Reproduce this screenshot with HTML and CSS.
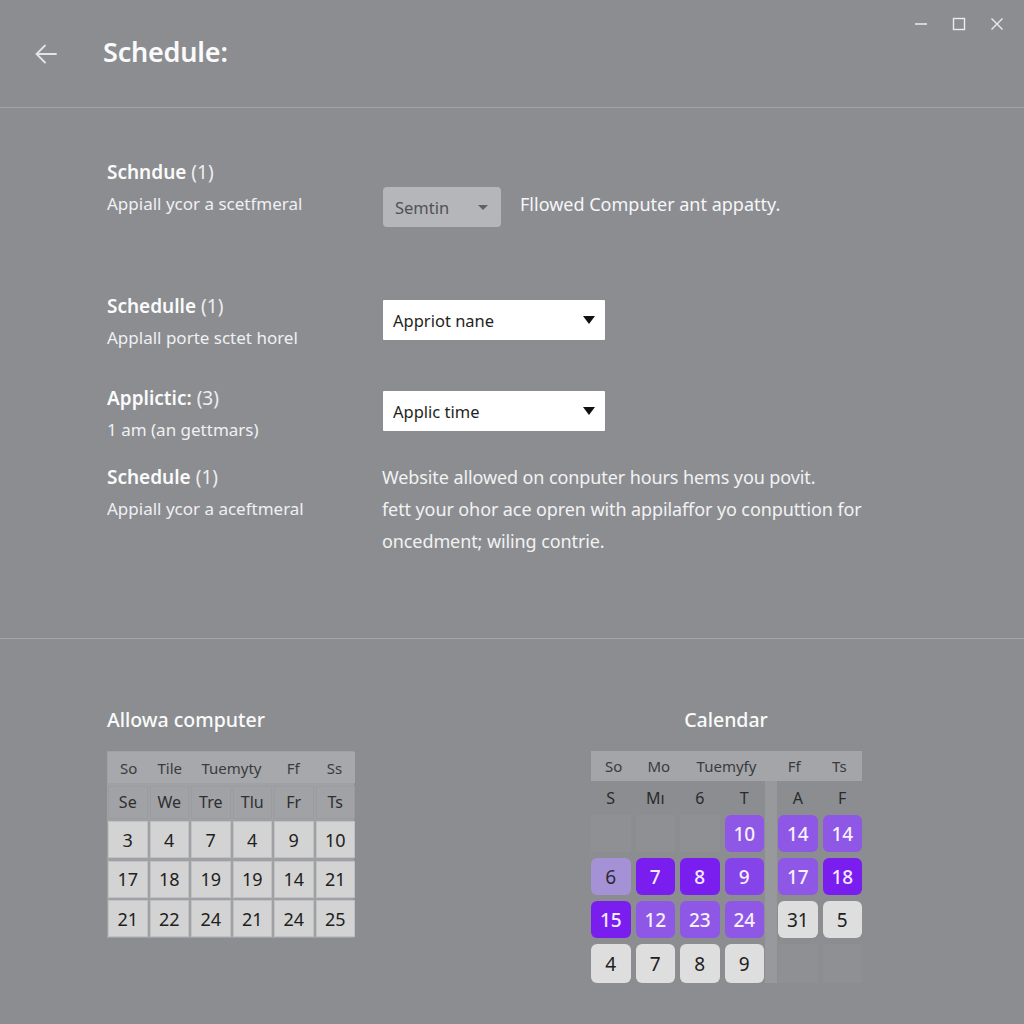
FILE: index.html
```html
<!DOCTYPE html>
<html>
<head>
<meta charset="utf-8">
<link rel="stylesheet" href="styles.css">
</head>
<body>
<div class="window">
  <header class="titlebar">
    <svg class="back" width="24" height="24" viewBox="0 0 24 24"><path d="M22 12H3M11 3.5L2.5 12L11 20.5" fill="none" stroke="#e4e4e6" stroke-width="1.8" stroke-linecap="round"/></svg>
    <h1 class="title">Schedule:</h1>
    <div class="controls">
      <svg width="14" height="14" viewBox="0 0 14 14"><path d="M1 7H13" stroke="#ececee" stroke-width="1.5"/></svg>
      <svg width="14" height="14" viewBox="0 0 14 14"><rect x="1.5" y="1.5" width="11" height="11" fill="none" stroke="#ececee" stroke-width="1.4"/></svg>
      <svg width="14" height="14" viewBox="0 0 14 14"><path d="M1.5 1.5L12.5 12.5M12.5 1.5L1.5 12.5" stroke="#ececee" stroke-width="1.4"/></svg>
    </div>
  </header>

  <section class="form">
    <div class="row row1">
      <div class="labels">
        <div class="label">Schndue <span class="num">(1)</span></div>
        <div class="sub">Appiall ycor a scetfmeral</div>
      </div>
      <div class="ctrl ctrl1">
        <div class="select grey">Semtin <span class="caret small"></span></div>
        <div class="note">Fllowed Computer ant appatty.</div>
      </div>
    </div>
    <div class="row row2">
      <div class="labels">
        <div class="label">Schedulle <span class="num">(1)</span></div>
        <div class="sub">Applall porte sctet horel</div>
      </div>
      <div class="ctrl ctrl2">
        <div class="select white">Appriot nane <span class="caret"></span></div>
      </div>
    </div>
    <div class="row row3">
      <div class="labels">
        <div class="label">Applictic: <span class="num">(3)</span></div>
        <div class="sub">1 am (an gettmars)</div>
      </div>
      <div class="ctrl ctrl3">
        <div class="select white">Applic time <span class="caret"></span></div>
      </div>
    </div>
    <div class="row row4">
      <div class="labels">
        <div class="label">Schedule <span class="num">(1)</span></div>
        <div class="sub">Appiall ycor a aceftmeral</div>
      </div>
      <div class="para">Website allowed on conputer hours hems you povit.<br>fett your ohor ace opren with appilaffor yo conputtion for<br>oncedment; wiling contrie.</div>
    </div>
  </section>

  <section class="cals">
    <div class="calblock left">
      <div class="caltitle">Allowa computer</div>
      <div class="cal1">
        <div class="h1row">
          <span>So</span><span>Tile</span><span class="span2">Tuemyty</span><span>Ff</span><span>Ss</span>
        </div>
        <div class="wd">Se</div><div class="wd">We</div><div class="wd">Tre</div><div class="wd">Tlu</div><div class="wd">Fr</div><div class="wd">Ts</div>
        <div class="d">3</div><div class="d">4</div><div class="d">7</div><div class="d">4</div><div class="d">9</div><div class="d">10</div>
        <div class="d">17</div><div class="d">18</div><div class="d">19</div><div class="d">19</div><div class="d">14</div><div class="d">21</div>
        <div class="d">21</div><div class="d">22</div><div class="d">24</div><div class="d">21</div><div class="d">24</div><div class="d">25</div>
      </div>
    </div>
    <div class="calblock right">
      <div class="caltitle center">Calendar</div>
      <div class="cal2">
        <div class="h2row">
          <span>So</span><span>Mo</span><span class="span2">Tuemyfy</span><span>Ff</span><span>Ts</span>
        </div>
        <div class="sep"></div>
        <div class="l">S</div><div class="l">M&#x131;</div><div class="l">6</div><div class="l">T</div><div class="l c5">A</div><div class="l">F</div>
        <div class="e"></div><div class="e"></div><div class="e"></div><div class="c mid">10</div><div class="c mid c5">14</div><div class="c mid">14</div>
        <div class="c pale">6</div><div class="c deep">7</div><div class="c deep">8</div><div class="c mid2">9</div><div class="c mid c5">17</div><div class="c deep">18</div>
        <div class="c deep">15</div><div class="c mid">12</div><div class="c mid">23</div><div class="c mid">24</div><div class="c gr c5">31</div><div class="c gr">5</div>
        <div class="c gr last">4</div><div class="c gr last">7</div><div class="c gr last">8</div><div class="c gr last">9</div><div class="e c5 last"></div><div class="e last"></div>
      </div>
    </div>
  </section>
</div>
</body>
</html>
```

FILE: styles.css
```css
* { box-sizing: border-box; }
html, body { margin: 0; padding: 0; }
body {
  background: #8b8d91;
  font-family: "Noto Sans", "Open Sans", sans-serif;
  color: #f4f4f5;
  width: 1024px;
  height: 1024px;
  overflow: hidden;
}
.window { width: 1024px; height: 1024px; }

.titlebar {
  height: 108px;
  border-bottom: 1px solid #a3a5a9;
  display: flex;
  align-items: flex-start;
}
.back { margin: 42px 0 0 34px; }
.title {
  margin: 32px 0 0 45px;
  font-size: 27px;
  font-weight: 600;
  line-height: 40px;
  color: #fafafa;
  letter-spacing: -0.2px;
}
.controls {
  margin-left: auto;
  margin-top: 17px;
  margin-right: 20px;
  display: flex;
  gap: 24px;
}

.form { padding: 48px 0 0 107px; height: 531px; border-bottom: 1px solid #a3a5a9; }
.row { display: flex; align-items: flex-start; }
.labels { width: 276px; flex: none; }
.label { font-size: 19px; line-height: 32px; font-weight: 600; color: #fbfbfb; }
.label .num { font-weight: 400; color: #eeeeef; }
.sub { font-size: 17px; line-height: 32px; color: #f0f0f1; }
.row1 { height: 64px; }
.row2 { margin-top: 70px; }
.row3 { margin-top: 28px; }
.row4 { margin-top: 15px; }
.ctrl { display: flex; align-items: center; }
.ctrl1 { margin-top: 31px; }
.ctrl2 { margin-top: 10px; }
.ctrl3 { margin-top: 9px; }
.select {
  height: 40px;
  display: flex;
  align-items: center;
  font-size: 16.5px;
  padding-left: 10px;
  position: relative;
}
.select.grey {
  width: 118px;
  background: #b5b6b9;
  border-radius: 4px;
  color: #515255;
  padding-left: 12px;
}
.select.white {
  width: 222px;
  background: #ffffff;
  color: #1f1f21;
  border-radius: 1px;
}
.caret {
  position: absolute;
  right: 10px;
  top: 16px;
  width: 0; height: 0;
  border-left: 6px solid transparent;
  border-right: 6px solid transparent;
  border-top: 8px solid #111;
}
.caret.small {
  right: 13px; top: 18px;
  border-left-width: 5px; border-right-width: 5px; border-top: 5px solid #606165;
}
.note { margin-left: 19px; font-size: 18px; color: #f6f6f7; margin-top: -6px; }
.para { font-size: 18px; line-height: 32px; color: #f2f2f3; letter-spacing: -0.1px; margin-left: -1px; }

.cals { display: flex; padding-left: 107px; padding-top: 65px; }
.calblock.left { width: 484px; }
.caltitle { font-size: 19.5px; line-height: 32px; font-weight: 500; color: #fbfbfb; margin-bottom: 15px; }
.caltitle.center { text-align: center; width: 270px; }

.cal1 {
  width: 247px;
  display: grid;
  grid-template-columns: repeat(6, 39.5px);
  grid-template-rows: 31px 33px 37px 37px 37px;
  column-gap: 2px;
  row-gap: 2.5px;
  background: #9fa1a4;
  padding: 1px;
  color: #2c2c2e;
}
.h1row {
  grid-column: 1 / 7;
  display: grid;
  grid-template-columns: repeat(6, 1fr);
  align-items: center;
  background: #a6a8ab;
  font-size: 15px;
  color: #3a3b3d;
}
.h1row span { text-align: center; }
.span2 { grid-column: span 2; }
.wd { background: #a0a2a5; display: flex; align-items: center; justify-content: center; font-size: 16px; color: #2e2f31; box-shadow: inset 0 0 0 1px #9a9c9f; }
.d { background: #d3d3d4; display: flex; align-items: center; justify-content: center; font-size: 18px; color: #1e1e20; box-shadow: inset 0 0 0 1px #bfc0c2; }

.cal2 {
  width: 270px;
  display: grid;
  grid-template-columns: 39.5px 39.5px 39.5px 39.5px 4px 39.5px 39.5px;
  grid-template-rows: 30px 34px 43px 43px 43px 39px;
  column-gap: 5px;
  row-gap: 0;
  color: #2a2a2c;
}
.h2row {
  grid-column: 1 / -1;
  display: grid;
  grid-template-columns: repeat(6, 1fr);
  align-items: center;
  background: #a3a5a8;
  font-size: 15px;
  color: #3a3b3d;
}
.h2row span { text-align: center; }
.cal2 > .c5 { grid-column-start: 6; }
.sep { grid-column: 5; grid-row: 2 / 7; margin: 0 -4px; background: #97999d; }
.l { display: flex; align-items: center; justify-content: center; font-size: 16px; color: #2a2a2c; }
.e { background: #8e9094; height: 37px; }
.c { display: flex; align-items: center; justify-content: center; font-size: 19px; border-radius: 6px; font-weight: 500; height: 37px; }
.cal2 > .last { height: 39px; }
.mid { background: #8e57e6; color: #f6f0ff; }
.mid2 { background: #8444ea; color: #f6f0ff; }
.deep { background: #7a1ef0; color: #f4eaff; }
.pale { background: #a592d6; color: #2d2a35; font-weight: 400; }
.gr { background: #dedede; color: #202022; font-weight: 400; }
```
